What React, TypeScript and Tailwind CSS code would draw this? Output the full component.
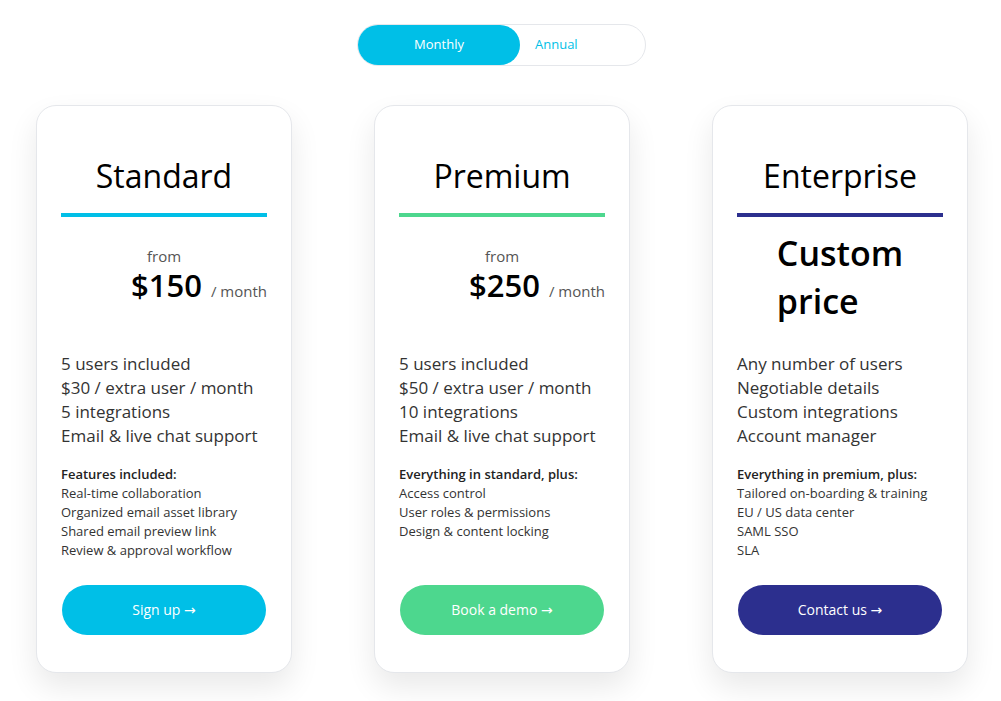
import React from 'react';

type Plan = {
  name: string;
  accent: string;
  line: string;
  price?: string;
  basics: string[];
  heading: string;
  features: string[];
  cta: string;
};

const plans: Plan[] = [
  {
    name: 'Standard',
    accent: 'bg-[#00bfe7]',
    line: 'bg-[#00bfe7]',
    price: '$150',
    basics: ['5 users included', '$30 / extra user / month', '5 integrations', 'Email & live chat support'],
    heading: 'Features included:',
    features: ['Real-time collaboration', 'Organized email asset library', 'Shared email preview link', 'Review & approval workflow'],
    cta: 'Sign up',
  },
  {
    name: 'Premium',
    accent: 'bg-[#4dd78e]',
    line: 'bg-[#4dd78e]',
    price: '$250',
    basics: ['5 users included', '$50 / extra user / month', '10 integrations', 'Email & live chat support'],
    heading: 'Everything in standard, plus:',
    features: ['Access control', 'User roles & permissions', 'Design & content locking'],
    cta: 'Book a demo',
  },
  {
    name: 'Enterprise',
    accent: 'bg-[#2c2f8e]',
    line: 'bg-[#2c2f8e]',
    basics: ['Any number of users', 'Negotiable details', 'Custom integrations', 'Account manager'],
    heading: 'Everything in premium, plus:',
    features: ['Tailored on-boarding & training', 'EU / US data center', 'SAML SSO', 'SLA'],
    cta: 'Contact us',
  },
];

function PlanCard({ plan }: { plan: Plan }) {
  return (
    <div className="flex h-[568px] w-[256px] flex-col rounded-[20px] border border-gray-200 bg-white px-6 pb-[37px] pt-[50px] shadow-[0_14px_30px_rgba(0,0,0,0.09)]">
      <h2 className="text-center text-[32px] leading-[40px] text-black">{plan.name}</h2>
      <div className={`mt-[17px] h-[4px] ${plan.line}`} />
      <div className="h-[135px]">
        {plan.price ? (
          <>
            <div className="mt-[28px] text-center text-[15px] leading-[22px] text-[#555]">from</div>
            <div className="mt-0 flex items-baseline justify-end gap-[9px]">
              <span className="text-[31px] font-semibold leading-[36px] text-black">{plan.price}</span>
              <span className="text-[15px] text-[#555]">/ month</span>
            </div>
          </>
        ) : (
          <div className="mt-[12px] flex justify-center">
            <div className="text-[34px] font-semibold leading-[48px] text-black">
              Custom
              <br />
              price
            </div>
          </div>
        )}
      </div>
      <ul className="text-[17px] leading-[24px] text-[#333]">
        {plan.basics.map((b) => (
          <li key={b}>{b}</li>
        ))}
      </ul>
      <div className="mt-[17px] text-[13px] font-semibold leading-[19px] text-[#222]">{plan.heading}</div>
      <ul className="text-[13px] leading-[19px] text-[#333]">
        {plan.features.map((f) => (
          <li key={f}>{f}</li>
        ))}
      </ul>
      <button
        className={`mx-[1px] mt-auto h-[50px] rounded-full text-[14px] font-medium text-white ${plan.accent}`}
      >
        {plan.cta} <span className="font-['DejaVu_Sans',sans-serif] font-normal">→</span>
      </button>
    </div>
  );
}

export default function App() {
  return (
    <div className="min-h-[701px] bg-white pt-[24px] font-['Open_Sans',sans-serif]">
      <div className="flex justify-center pl-[2px]">
        <div className="flex h-[42px] w-[289px] items-stretch rounded-full border border-gray-200 bg-white">
          <button className="w-[162px] rounded-full bg-[#00bfe7] text-[13px] font-medium text-white">Monthly</button>
          <button className="px-[15px] text-[13px] font-medium text-[#00bfe7]">Annual</button>
        </div>
      </div>
      <div className="mt-[39px] flex justify-center gap-[82px] pl-[3px]">
        {plans.map((p) => (
          <PlanCard key={p.name} plan={p} />
        ))}
      </div>
    </div>
  );
}
